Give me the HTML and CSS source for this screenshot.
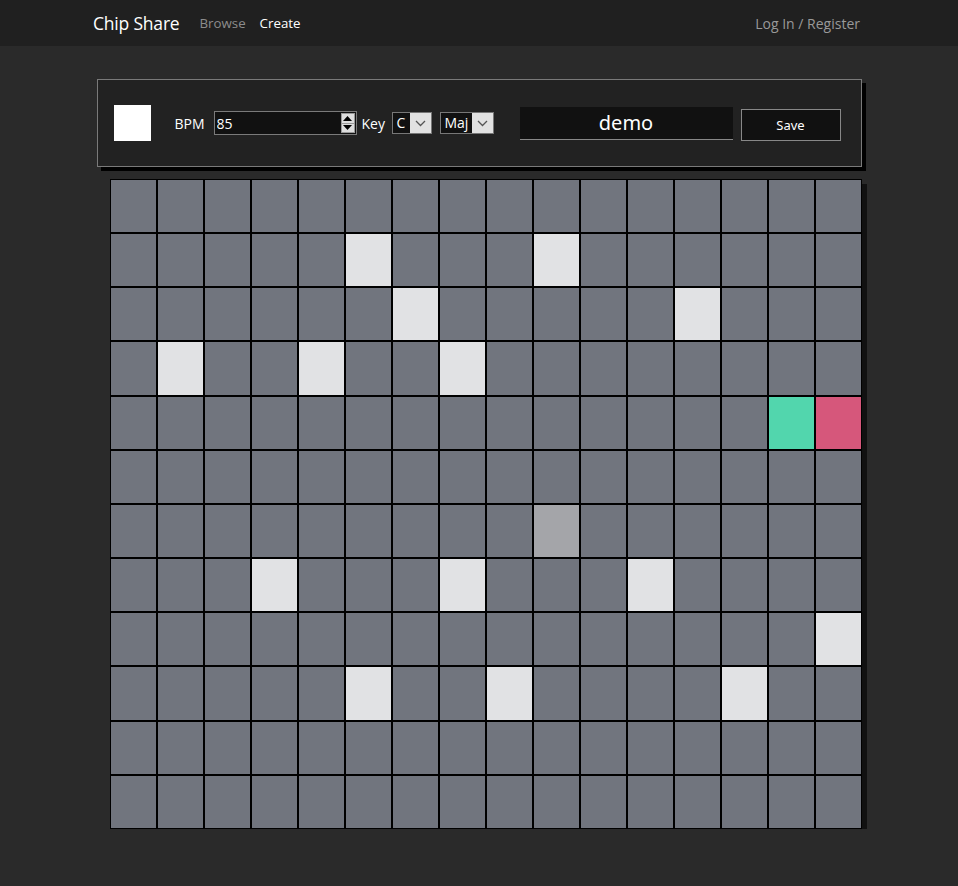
FILE: index.html
```html
<!DOCTYPE html>
<html lang="en">
<head>
<meta charset="utf-8">
<title>Chip Share - Create</title>
<link rel="stylesheet" href="styles.css">
</head>
<body>
<nav class="navbar">
  <div class="nav-left">
    <a class="brand" href="#">Chip Share</a>
    <a class="nav-link" href="#">Browse</a>
    <a class="nav-link active" href="#">Create</a>
  </div>
  <a class="nav-link login" href="#">Log In / Register</a>
</nav>

<main class="main">
  <section class="panel">
    <div class="swatch"></div>
    <label class="lbl bpm-lbl">BPM</label>
    <div class="bpm">
      <input class="bpm-input" type="text" value="85">
      <span class="spin">
        <span class="spin-btn"><svg width="9" height="5" viewBox="0 0 9 5"><path d="M4.5 0 L9 5 L0 5 Z" fill="#000"/></svg></span>
        <span class="spin-btn"><svg width="9" height="5" viewBox="0 0 9 5"><path d="M0 0 L9 0 L4.5 5 Z" fill="#000"/></svg></span>
      </span>
    </div>
    <label class="lbl key-lbl">Key</label>
    <div class="sel sel-key">
      <span class="sel-val">C</span>
      <span class="sel-arrow"><svg width="11" height="7" viewBox="0 0 11 7"><path d="M1 1 L5.5 5.5 L10 1" fill="none" stroke="#555" stroke-width="1.3"/></svg></span>
    </div>
    <div class="sel sel-mode">
      <span class="sel-val">Maj</span>
      <span class="sel-arrow"><svg width="11" height="7" viewBox="0 0 11 7"><path d="M1 1 L5.5 5.5 L10 1" fill="none" stroke="#555" stroke-width="1.3"/></svg></span>
    </div>
    <input class="title-input" type="text" value="demo">
    <button class="save">Save</button>
  </section>

  <section class="grid">
    <span class="c"></span><span class="c"></span><span class="c"></span><span class="c"></span><span class="c"></span><span class="c"></span><span class="c"></span><span class="c"></span><span class="c"></span><span class="c"></span><span class="c"></span><span class="c"></span><span class="c"></span><span class="c"></span><span class="c"></span><span class="c"></span>

    <span class="c"></span><span class="c"></span><span class="c"></span><span class="c"></span><span class="c"></span><span class="c on"></span><span class="c"></span><span class="c"></span><span class="c"></span><span class="c on"></span><span class="c"></span><span class="c"></span><span class="c"></span><span class="c"></span><span class="c"></span><span class="c"></span>

    <span class="c"></span><span class="c"></span><span class="c"></span><span class="c"></span><span class="c"></span><span class="c"></span><span class="c on"></span><span class="c"></span><span class="c"></span><span class="c"></span><span class="c"></span><span class="c"></span><span class="c on"></span><span class="c"></span><span class="c"></span><span class="c"></span>

    <span class="c"></span><span class="c on"></span><span class="c"></span><span class="c"></span><span class="c on"></span><span class="c"></span><span class="c"></span><span class="c on"></span><span class="c"></span><span class="c"></span><span class="c"></span><span class="c"></span><span class="c"></span><span class="c"></span><span class="c"></span><span class="c"></span>

    <span class="c"></span><span class="c"></span><span class="c"></span><span class="c"></span><span class="c"></span><span class="c"></span><span class="c"></span><span class="c"></span><span class="c"></span><span class="c"></span><span class="c"></span><span class="c"></span><span class="c"></span><span class="c"></span><span class="c teal"></span><span class="c pink"></span>

    <span class="c"></span><span class="c"></span><span class="c"></span><span class="c"></span><span class="c"></span><span class="c"></span><span class="c"></span><span class="c"></span><span class="c"></span><span class="c"></span><span class="c"></span><span class="c"></span><span class="c"></span><span class="c"></span><span class="c"></span><span class="c"></span>

    <span class="c"></span><span class="c"></span><span class="c"></span><span class="c"></span><span class="c"></span><span class="c"></span><span class="c"></span><span class="c"></span><span class="c"></span><span class="c mid"></span><span class="c"></span><span class="c"></span><span class="c"></span><span class="c"></span><span class="c"></span><span class="c"></span>

    <span class="c"></span><span class="c"></span><span class="c"></span><span class="c on"></span><span class="c"></span><span class="c"></span><span class="c"></span><span class="c on"></span><span class="c"></span><span class="c"></span><span class="c"></span><span class="c on"></span><span class="c"></span><span class="c"></span><span class="c"></span><span class="c"></span>

    <span class="c"></span><span class="c"></span><span class="c"></span><span class="c"></span><span class="c"></span><span class="c"></span><span class="c"></span><span class="c"></span><span class="c"></span><span class="c"></span><span class="c"></span><span class="c"></span><span class="c"></span><span class="c"></span><span class="c"></span><span class="c on"></span>

    <span class="c"></span><span class="c"></span><span class="c"></span><span class="c"></span><span class="c"></span><span class="c on"></span><span class="c"></span><span class="c"></span><span class="c on"></span><span class="c"></span><span class="c"></span><span class="c"></span><span class="c"></span><span class="c on"></span><span class="c"></span><span class="c"></span>

    <span class="c"></span><span class="c"></span><span class="c"></span><span class="c"></span><span class="c"></span><span class="c"></span><span class="c"></span><span class="c"></span><span class="c"></span><span class="c"></span><span class="c"></span><span class="c"></span><span class="c"></span><span class="c"></span><span class="c"></span><span class="c"></span>

    <span class="c"></span><span class="c"></span><span class="c"></span><span class="c"></span><span class="c"></span><span class="c"></span><span class="c"></span><span class="c"></span><span class="c"></span><span class="c"></span><span class="c"></span><span class="c"></span><span class="c"></span><span class="c"></span><span class="c"></span><span class="c"></span>
  </section>
</main>
</body>
</html>
```

FILE: styles.css
```css
* { box-sizing: border-box; }

html, body {
  margin: 0;
  padding: 0;
  background: #2a2a2a;
  font-family: "Open Sans", "Noto Sans", sans-serif;
  color: #fff;
}

.navbar {
  height: 46px;
  background: #202020;
  display: flex;
  align-items: center;
  justify-content: space-between;
  padding: 0 98px 0 93px;
}

.nav-left {
  display: flex;
  align-items: center;
}

.navbar a { text-decoration: none; }

.brand {
  color: #fff;
  font-size: 17.5px;
  margin-right: 20px;
  letter-spacing: -0.2px;
}

.nav-link {
  color: #8c8c8c;
  font-size: 13.3px;
  margin-right: 14px;
}

.nav-link.active { color: #fff; }
.nav-link.login { color: #999; margin-right: 0; font-size: 14px; }

.main {
  width: 765px;
  margin: 33px auto 0;
}

.panel {
  height: 88px;
  background: #222;
  border: 1px solid #7a7a7a;
  box-shadow: 4px 4px 0 #000;
  display: flex;
  align-items: center;
  padding-left: 16px;
}

.swatch {
  width: 37px;
  height: 36px;
  background: #fff;
  margin-right: 24px;
}

.lbl {
  font-size: 14px;
  color: #fff;
}

.bpm-lbl {
  width: 39px;
}

.bpm {
  width: 143px;
  height: 24px;
  display: flex;
  align-items: center;
  background: #111;
  border: 1px solid #7a7a7a;
  margin-right: 5px;
}

.bpm-input {
  flex: 1;
  min-width: 0;
  height: 100%;
  background: transparent;
  border: 0;
  color: #fff;
  font-family: inherit;
  font-size: 14px;
  padding: 0 2px;
  outline: none;
}

.spin {
  display: flex;
  flex-direction: column;
  width: 14px;
  height: 20px;
  margin-right: 1px;
  background: #ddd;
  border: 1px solid #999;
}

.spin-btn {
  flex: 1;
  display: flex;
  align-items: center;
  justify-content: center;
}

.spin-btn + .spin-btn { border-top: 1px solid #999; }

.key-lbl {
  width: 30px;
}

.sel {
  height: 22px;
  display: flex;
  background: #111;
  border: 1px solid #777;
}

.sel-key { width: 40px; margin-right: 8px; }
.sel-mode { width: 54px; margin-right: 26px; }

.sel-val {
  flex: 1;
  font-size: 14px;
  line-height: 20px;
  padding-left: 4px;
  color: #fff;
}

.sel-arrow {
  width: 21px;
  background: #e2e2e2;
  display: flex;
  align-items: center;
  justify-content: center;
}

.title-input {
  width: 213px;
  height: 33px;
  background: #111;
  border: 0;
  border-bottom: 1px solid #888;
  color: #fff;
  font-family: "Noto Sans", "Open Sans", sans-serif;
  font-size: 20px;
  text-align: center;
  margin-right: 8px;
  outline: none;
  padding: 0 0 1px;
}

.save {
  width: 100px;
  height: 32px;
  margin-top: 3px;
  background: #111;
  border: 1px solid #888;
  color: #fff;
  font-family: "Noto Sans", sans-serif;
  font-size: 13px;
}

.grid {
  margin: 12px 0 0 13px;
  width: 752px;
  display: grid;
  grid-template-columns: repeat(16, 47px);
  grid-auto-rows: 54.17px;
  background: #000;
  box-shadow: 5px 5px 0 #111;
}

.c {
  border: 1px solid #000;
  background: #71757e;
}

.c.on { background: #e1e2e4; }
.c.mid { background: #a4a5a9; }
.c.teal { background: #52d6ad; }
.c.pink { background: #d6577b; }
```
